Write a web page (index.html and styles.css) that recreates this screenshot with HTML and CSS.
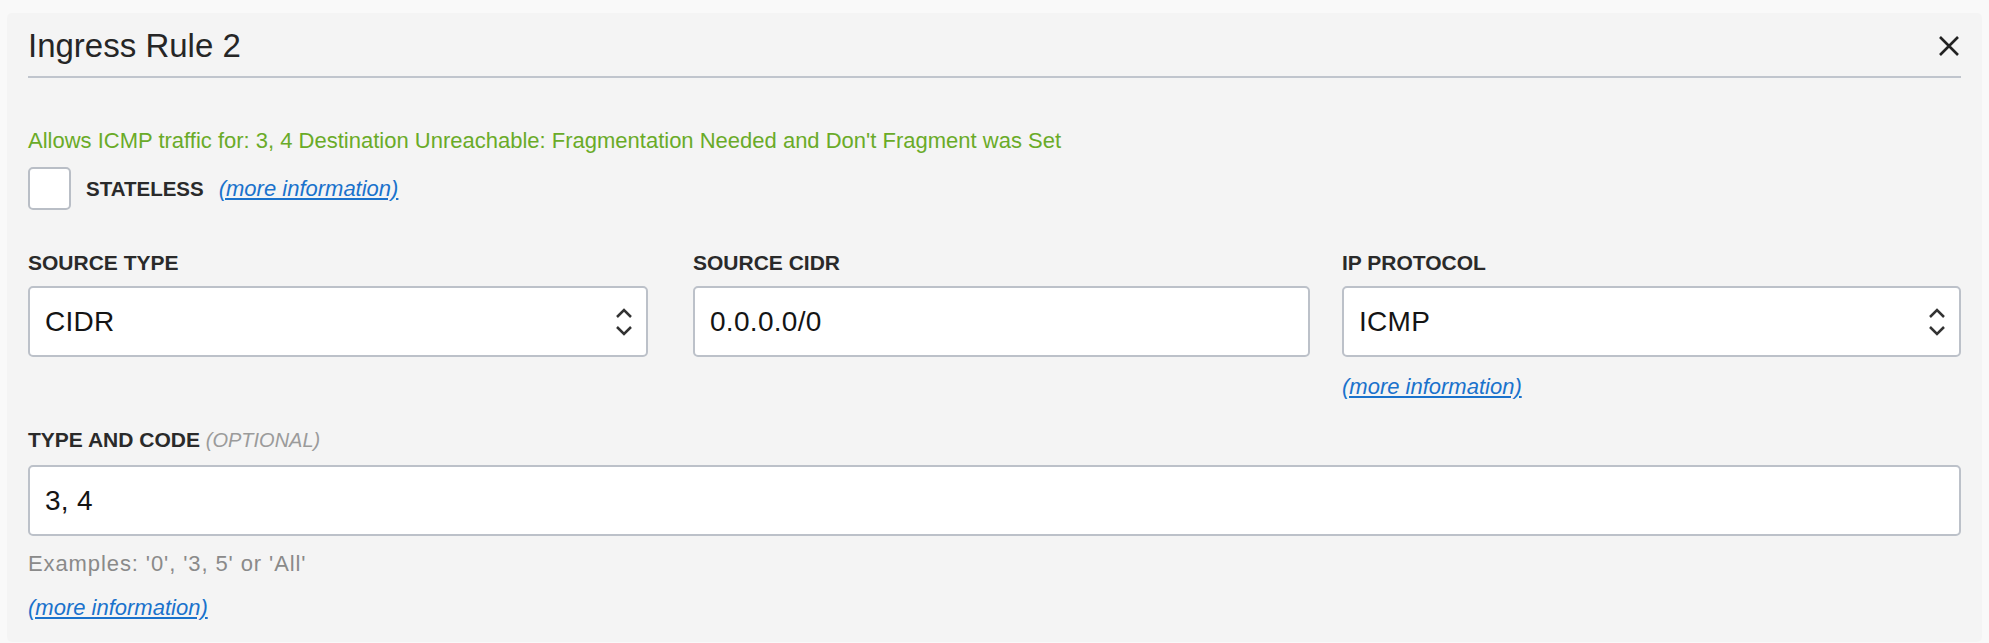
FILE: index.html
```html
<!DOCTYPE html>
<html lang="en">
<head>
<meta charset="utf-8">
<title>Ingress Rule 2</title>
<link rel="stylesheet" href="styles.css">
</head>
<body>
<section class="panel">
  <header class="panel-header">
    <h2 class="panel-title">Ingress Rule 2</h2>
    <button class="close-btn" type="button" aria-label="Close">
      <svg width="22" height="22" viewBox="0 0 22 22"><path d="M2 2 L20 20 M20 2 L2 20" stroke="#222" stroke-width="2.6" fill="none"/></svg>
    </button>
  </header>

  <p class="rule-summary">Allows ICMP traffic for: 3, 4 Destination Unreachable: Fragmentation Needed and Don't Fragment was Set</p>

  <div class="check-row">
    <span class="checkbox"></span>
    <span class="field-label check-label">STATELESS</span>
    <a class="info-link" href="#">(more information)</a>
  </div>

  <div class="field-grid">
    <div class="field field-first">
      <span class="field-label">SOURCE TYPE</span>
      <div class="select-wrap">
        <select class="control"><option>CIDR</option></select>
        <svg class="select-icon" width="18" height="30" viewBox="0 0 18 30"><path d="M2 10 L9 3 L16 10 M2 20 L9 27 L16 20" stroke="#333" stroke-width="2.5" fill="none"/></svg>
      </div>
    </div>
    <div class="field">
      <span class="field-label">SOURCE CIDR</span>
      <input class="control" type="text" value="0.0.0.0/0">
    </div>
    <div class="field">
      <span class="field-label">IP PROTOCOL</span>
      <div class="select-wrap">
        <select class="control"><option>ICMP</option></select>
        <svg class="select-icon" width="18" height="30" viewBox="0 0 18 30"><path d="M2 10 L9 3 L16 10 M2 20 L9 27 L16 20" stroke="#333" stroke-width="2.5" fill="none"/></svg>
      </div>
      <a class="info-link" href="#">(more information)</a>
    </div>
  </div>

  <div class="field field-wide">
    <span class="field-label">TYPE AND CODE <span class="optional">(OPTIONAL)</span></span>
    <input class="control" type="text" value="3, 4">
    <p class="help-text">Examples: '0', '3, 5' or 'All'</p>
    <a class="info-link" href="#">(more information)</a>
  </div>
</section>
</body>
</html>
```

FILE: styles.css
```css
html, body {
  margin: 0;
}

body {
  background: #f9f9f9;
  padding: 13px 7px 1px;
  font-family: "Liberation Sans", Arial, sans-serif;
  color: #262626;
}

.panel {
  background: #f4f4f4;
  border-radius: 5px;
  padding: 14px 21px 22px;
}

.panel-header {
  display: flex;
  align-items: center;
  justify-content: space-between;
  padding-bottom: 11px;
  border-bottom: 2px solid #c0c5cd;
}

.panel-title {
  margin: 0;
  font-size: 33px;
  line-height: 38px;
  font-weight: 400;
  color: #262626;
}

.close-btn {
  border: 0;
  background: none;
  padding: 0;
  margin-right: 1px;
  width: 22px;
  height: 22px;
  display: flex;
  cursor: pointer;
}

.rule-summary {
  margin: 51px 0 0;
  font-size: 22px;
  line-height: 24px;
  color: #6aab28;
}

.check-row {
  display: flex;
  align-items: center;
  margin-top: 14px;
}

.checkbox {
  width: 43px;
  height: 43px;
  box-sizing: border-box;
  border: 2px solid #b9bec6;
  border-radius: 5px;
  background: #fff;
  margin-right: 15px;
}

.field-label {
  font-size: 21px;
  line-height: 24px;
  font-weight: 700;
  color: #2a2a2a;
}

.check-label {
  font-size: 20.5px;
}

.info-link {
  font-size: 22px;
  line-height: 24px;
  font-style: italic;
  color: #1a72cc;
  text-decoration: underline;
}

.check-row .info-link {
  margin-left: 15px;
}

.field-grid {
  display: grid;
  grid-template-columns: 633px 617px 1fr;
  column-gap: 32px;
  margin-top: 41px;
  align-items: start;
}

.field {
  display: flex;
  flex-direction: column;
  align-items: flex-start;
}

.field-first {
  padding-right: 13px;
}

.field-grid .field-label {
  margin-bottom: 11px;
}

.control {
  width: 100%;
  height: 71px;
  box-sizing: border-box;
  border: 2px solid #bcc1c9;
  border-radius: 5px;
  background: #fff;
  font-family: "Liberation Sans", Arial, sans-serif;
  font-size: 28px;
  letter-spacing: 0.3px;
  color: #141414;
  padding: 0 50px 0 15px;
  margin: 0;
  appearance: none;
  -webkit-appearance: none;
  outline: none;
}

.select-wrap {
  position: relative;
  width: 100%;
}

.select-icon {
  position: absolute;
  right: 15px;
  top: 50%;
  transform: translateY(-50%);
  pointer-events: none;
}

.field-grid .info-link {
  margin-top: 18px;
}

.field-wide {
  margin-top: 29px;
}

.field-wide .field-label {
  margin-bottom: 13px;
}

.optional {
  font-size: 20px;
  font-weight: 400;
  font-style: italic;
  color: #9b9b9b;
}

.help-text {
  margin: 16px 0 0;
  font-size: 22px;
  line-height: 24px;
  letter-spacing: 0.9px;
  color: #8a8a8a;
}

.field-wide .info-link {
  margin-top: 20px;
}
```
